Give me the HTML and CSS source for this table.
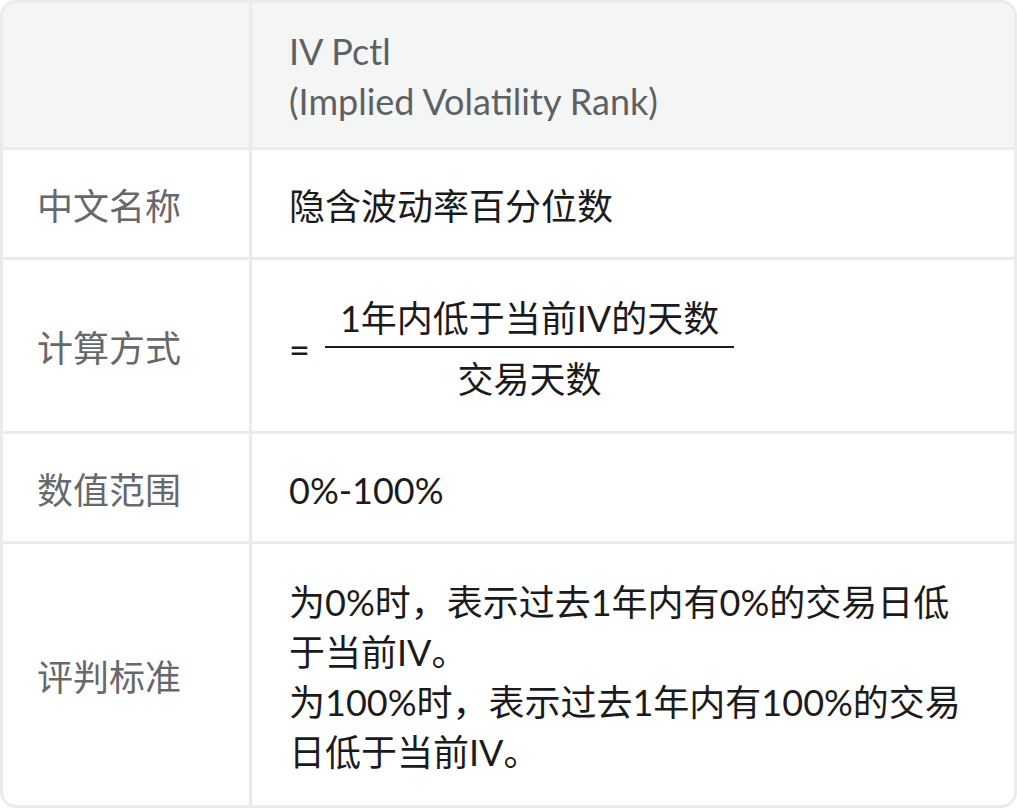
FILE: index.html
```html
<!DOCTYPE html>
<html lang="zh-CN">
<head>
<meta charset="utf-8">
<title>IV Pctl</title>
<link rel="stylesheet" href="styles.css">
</head>
<body>
<div class="table">
  <div class="cell head label"></div>
  <div class="cell head value">IV Pctl<br>(Implied Volatility Rank)</div>

  <div class="cell label">中文名称</div>
  <div class="cell value">隐含波动率百分位数</div>

  <div class="cell label">计算方式</div>
  <div class="cell value formula">
    <span class="eq">=</span>
    <span class="frac">
      <span class="num">1年内低于当前IV的天数</span>
      <span class="den">交易天数</span>
    </span>
  </div>

  <div class="cell label">数值范围</div>
  <div class="cell value">0%-100%</div>

  <div class="cell label last">评判标准</div>
  <div class="cell value last">为0%时，表示过去1年内有0%的交易日低于当前IV。<br>为100%时，表示过去1年内有100%的交易日低于当前IV。</div>
</div>
</body>
</html>
```

FILE: styles.css
```css
* { box-sizing: border-box; }
html, body { margin: 0; padding: 0; background: #ffffff; }
body {
  font-family: Lato, "Noto Sans CJK SC", sans-serif;
  font-size: 36px;
  line-height: 50px;
  color: #1b1b1d;
}
.table {
  width: 1017px;
  border: 3px solid #eaebec;
  border-radius: 16px;
  overflow: hidden;
  display: grid;
  grid-template-columns: 249px 1fr;
}
.cell {
  padding: 31px 36px 26px;
  border-bottom: 3px solid #eaebec;
  display: flex;
  align-items: center;
}
.cell.label {
  border-right: 3px solid #eaebec;
  color: #66686b;
  padding-left: 34px;
  padding-right: 20px;
}
.cell.value { padding-left: 37px; }
.cell.head {
  background: #f4f5f5;
  color: #5e6164;
  padding-top: 23px;
  padding-bottom: 21px;
}
.cell.head.value { display: block; }
.cell.last { border-bottom: none; padding-top: 33px; padding-bottom: 28px; }
.cell.last.value { display: block; }
.cell.formula {
  padding-top: 33px;
  padding-bottom: 27px;
}
.eq { margin-right: 15px; }
.frac {
  display: inline-flex;
  flex-direction: column;
  align-items: center;
}
.num {
  padding: 0 15px 3px;
  border-bottom: 2px solid #1b1b1d;
}
.den { padding-top: 6px; }
```
